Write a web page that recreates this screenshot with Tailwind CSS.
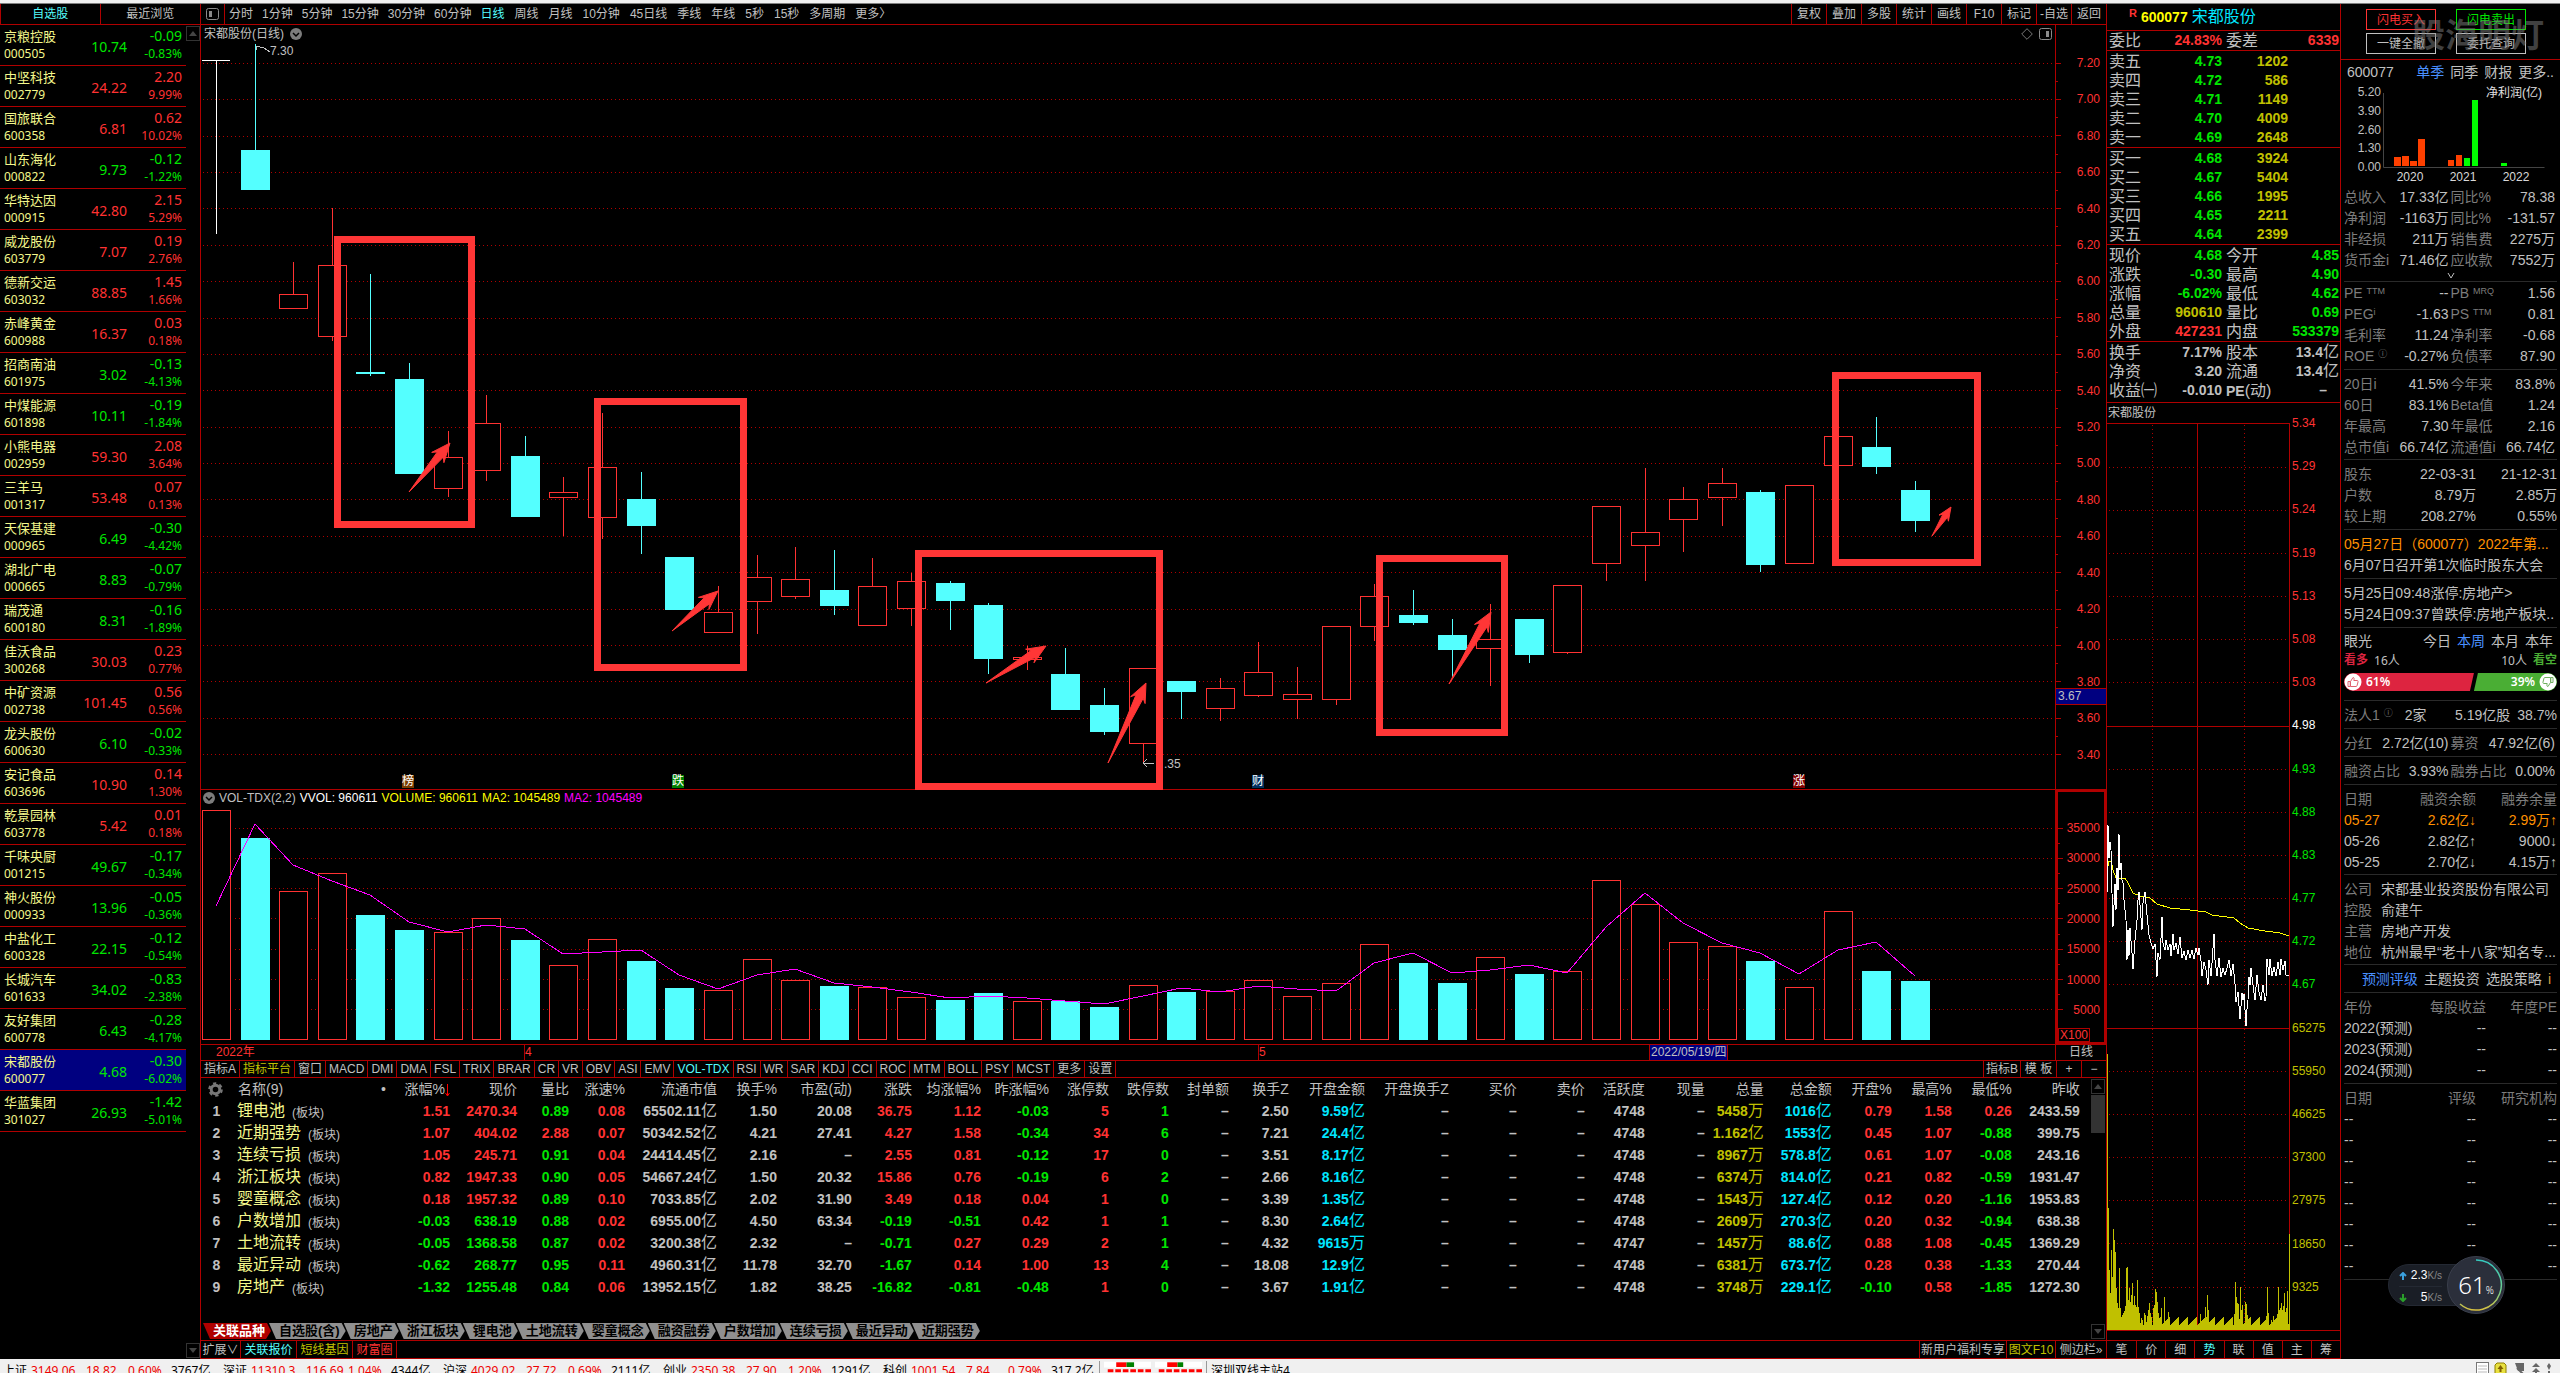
<!DOCTYPE html>
<html lang="zh-CN">
<head>
<meta charset="utf-8">
<meta name="viewport" content="width=device-width, initial-scale=1">
<title>宋都股份 600077</title>
<script src="https://cdn.jsdelivr.net/npm/@tailwindcss/browser@4"></script>
</head>
<body class="h-screen flex flex-col overflow-hidden bg-black text-[#c0c0c0] text-xs font-['Liberation_Sans','Noto_Sans_CJK_SC',sans-serif]">
<div class="h-1 shrink-0 bg-[#f0f0f0] border-b border-[#808080]"></div>

<div class="flex flex-1 min-h-0">

  <!-- Watch list -->
  <aside class="w-[201px] shrink-0 flex flex-col border-r border-[#b00000]">
    <div class="grid grid-cols-2 h-[21px] shrink-0 border-b border-l border-[#b00000]">
      <button class="text-[#54fcfc] border-r border-[#b00000]">自选股</button>
      <button>最近浏览</button>
    </div>
    <div class="flex flex-1 min-h-0">
      <ul id="watch" class="flex-1 font-['Noto_Sans','Noto_Sans_CJK_SC',sans-serif]"></ul>
      <div class="w-3.5 flex flex-col justify-between py-px">
        <button aria-label="向上" class="h-[15px] border border-[#333] grid place-items-center"><svg width="8" height="5" viewBox="0 0 8 5"><path d="M4 0l4 5H0z" fill="#444"/></svg></button>
        <button aria-label="向下" class="h-[15px] border border-[#333] grid place-items-center"><svg width="8" height="5" viewBox="0 0 8 5"><path d="M4 5l4-5H0z" fill="#444"/></svg></button>
      </div>
    </div>
  </aside>

  <!-- Chart and related boards -->
  <main class="flex-1 min-w-0 flex flex-col">
    <nav class="flex h-[21px] shrink-0 border-b border-[#b00000]">
      <button aria-label="侧栏" class="w-6 border-r border-[#b00000] grid place-items-center"><svg width="13" height="12" viewBox="0 0 13 12"><rect x=".5" y=".5" width="12" height="11" rx="2" fill="none" stroke="#8a8a8a"/><rect x="3" y="3" width="3" height="6" fill="#8a8a8a"/></svg></button>
      <div class="flex items-center gap-[9px] pl-1">
        <div id="minutes" class="flex gap-[9px]"></div>
        <div id="periods" class="flex gap-2.5"></div>
      </div>
      <div id="tools" class="ml-auto flex"></div>
    </nav>

    <section class="flex flex-1 min-h-0 border-b border-[#b00000]">
      <div class="flex-1 min-w-0 flex flex-col">
        <div class="relative flex-1 min-h-0 border-b border-[#b00000]">
          <svg id="price" class="absolute inset-0 w-full h-full overflow-visible" viewBox="201 25 1854 764" preserveAspectRatio="none" shape-rendering="crispEdges"></svg>
          <div class="absolute left-[3px] top-0 h-[18px] flex items-center gap-1.5">
            <span>宋都股份(日线)</span>
            <svg width="12" height="12" viewBox="0 0 12 12"><circle cx="6" cy="6" r="6" fill="#7c7c7c"/><path d="M3 5l3 3 3-3" fill="none" stroke="#000" stroke-width="1.5"/></svg>
          </div>
          <div class="absolute right-[3px] top-0 h-[18px] flex items-center gap-1.5">
            <svg width="12" height="12" viewBox="0 0 12 12"><path d="M6 .7L11.3 6 6 11.3.7 6z" fill="none" stroke="#777"/></svg>
            <svg width="13" height="12" viewBox="0 0 13 12"><rect x=".5" y=".5" width="12" height="11" rx="2" fill="none" stroke="#8a8a8a"/><rect x="7" y="3" width="3" height="6" fill="#8a8a8a"/></svg>
          </div>
          <div id="marks"></div>
        </div>
        <div class="relative h-[254px] shrink-0">
          <svg id="volume" class="absolute inset-0 w-full h-full" viewBox="201 790 1854 254" preserveAspectRatio="none" shape-rendering="crispEdges"></svg>
          <div class="absolute left-0.5 top-0 h-4 flex items-center gap-1 leading-4 whitespace-nowrap">
            <svg width="12" height="12" viewBox="0 0 12 12"><circle cx="6" cy="6" r="6" fill="#7c7c7c"/><path d="M3 5l3 3 3-3" fill="none" stroke="#000" stroke-width="1.5"/></svg>
            <span>VOL-TDX(2,2)</span><span class="text-white">VVOL: 960611</span><span class="text-[#ffff00]">VOLUME: 960611</span><span class="text-[#ffff00]">MA2: 1045489</span><span class="text-[#ff00ff]">MA2: 1045489</span>
          </div>
        </div>
      </div>
      <div class="w-[51px] shrink-0 flex flex-col border-l border-[#b00000] text-[#ff3232]">
        <div class="relative flex-1 min-h-0 border-b border-[#b00000]">
          <div id="paxis" class="h-full flex flex-col justify-between pt-[31px] pb-[27px] pr-1.5"></div>
          <div class="absolute inset-x-0 top-[663px] h-[17px] bg-[#000080] border-y border-[#b00000] text-[#c0c0c0] leading-[15px] pl-0.5">3.67</div>
        </div>
        <div class="relative h-[254px] border-2 border-[#b00000]">
          <div id="vaxis" class="h-full flex flex-col justify-between pt-[29px] pb-[25px] pr-1"></div>
          <div class="absolute left-0 bottom-0 border border-[#b00000] px-px leading-3">X100</div>
        </div>
      </div>
    </section>

    <div class="flex h-4 shrink-0 border-b border-[#b00000] leading-[15px]">
      <div class="relative flex-1 text-[#ff3232]" id="dates"></div>
      <button class="w-[51px] border-l border-[#b00000] text-[#c0c0c0]">日线</button>
    </div>

    <nav class="flex justify-between h-[17px] shrink-0 border-b border-[#b00000] leading-4">
      <div id="indicators" class="flex"></div>
      <div class="flex">
        <button class="w-[37px] border-l border-[#b00000] whitespace-nowrap">指标B</button>
        <button class="w-9 border-l border-[#b00000]">模 板</button>
        <button class="w-[25px] border-l border-[#b00000]">+</button>
        <button class="w-[25px] border-l border-[#b00000]">−</button>
      </div>
    </nav>

    <div class="flex h-[245px] shrink-0">
      <div class="flex-1 min-w-0">
        <table class="w-full table-fixed border-collapse text-sm leading-[22px] whitespace-nowrap text-right">
          <colgroup id="cols"></colgroup>
          <thead><tr id="thead"></tr></thead>
          <tbody id="tbody" class="font-bold"></tbody>
        </table>
      </div>
      <div class="w-[15px] flex flex-col pt-px pr-px">
        <button aria-label="向上" class="h-[15px] shrink-0 border border-[#333] grid place-items-center"><svg width="8" height="5" viewBox="0 0 8 5"><path d="M4 0l4 5H0z" fill="#444"/></svg></button>
        <div class="h-[38px] shrink-0 mt-px bg-[#333]"></div>
        <button aria-label="向下" class="h-[15px] shrink-0 mt-auto -mb-4 border border-[#333] grid place-items-center"><svg width="8" height="5" viewBox="0 0 8 5"><path d="M4 5l4-5H0z" fill="#444"/></svg></button>
      </div>
    </div>

    <nav id="boards" class="flex h-[18px] shrink-0 pb-px pl-2 border-b border-[#b00000] text-[13px] leading-4 font-bold"></nav>

    <nav class="flex justify-between h-[18px] shrink-0 border-b border-[#b00000] leading-4">
      <div class="flex">
        <button class="w-10 border-r border-[#b00000] whitespace-nowrap">扩展∨</button>
        <button class="w-14 border-r border-[#b00000] text-[#54fcfc]">关联报价</button>
        <button class="w-14 border-r border-[#b00000] text-[#c0c000]">短线基因</button>
        <button class="w-11 border-r border-[#b00000] text-[#ff3232]">财富圈</button>
      </div>
      <div class="flex">
        <button class="w-[87px] border-l border-[#b00000]">新用户福利专享</button>
        <button class="w-[49px] border-l border-[#b00000] text-[#c0c000] whitespace-nowrap">图文F10</button>
        <button class="w-[51px] border-l border-[#b00000]">侧边栏»</button>
      </div>
    </nav>
  </main>

  <!-- Quote panel -->
  <section class="w-[235px] shrink-0 flex flex-col border-x border-[#b00000]">
    <h1 class="flex items-center h-[27px] shrink-0 pl-[22px] border-b border-[#b00000]">
      <span class="text-[11px] leading-none font-bold text-[#ff3232] self-start mt-1">R</span>
      <span class="text-sm font-bold text-[#ffff00] ml-1">600077</span>
      <span class="text-base leading-none text-[#00e6ff] ml-1">宋都股份</span>
    </h1>
    <div id="quote" class="text-sm leading-[19px] font-bold"></div>
    <div class="h-5 leading-5 pl-px">宋都股份</div>
    <div class="flex flex-1 min-h-0 border-b border-[#b00000]">
      <svg id="intraday" class="flex-1 min-w-0 h-full" viewBox="2107 423 183 907" preserveAspectRatio="none" shape-rendering="crispEdges"></svg>
      <div class="w-[50px] shrink-0 pl-0.5">
        <div id="iaxis" class="h-full flex flex-col justify-between -mt-2 pb-[27px] leading-4"></div>
      </div>
    </div>
    <div id="qtabs" class="grid grid-cols-8 h-[19px] shrink-0 mt-[9px] border-y border-[#b00000] leading-4"></div>
  </section>

  <!-- Company info -->
  <aside class="relative w-[219px] shrink-0 text-sm leading-[21px] whitespace-nowrap">
    <div class="relative grid grid-cols-2 gap-x-5 gap-y-[3px] pl-[25px] pr-[34px] pt-[5px] pb-[5px] border-b border-[#b00000] text-xs">
      <button class="h-[21px] border border-[#ff3232] text-[#ff3232]">闪电买入</button>
      <button class="h-[21px] border border-[#00e600] text-[#00e600]">闪电卖出</button>
      <button class="h-[21px] border border-[#c0c0c0]">一键全撤</button>
      <button class="h-[21px] border border-[#c0c0c0]">委托查询</button>
      <div class="absolute left-[71px] top-3.5 text-[33px] leading-9 font-bold text-[#808080]/50 pointer-events-none">股海明灯</div>
    </div>
    <div class="flex h-6 items-center pl-1.5 pr-1.5">
      <span class="mr-auto">600077</span>
      <span class="flex gap-1.5"><a href="#" class="text-[#4a90ff]">单季</a><a href="#">同季</a><a href="#">财报</a><a href="#">更多..</a></span>
    </div>
    <svg class="block w-full h-[103px] text-xs" viewBox="2341 84 219 103">
      <g fill="#c0c0c0" text-anchor="end"><text x="2381" y="96">5.20</text><text x="2381" y="115">3.90</text><text x="2381" y="134">2.60</text><text x="2381" y="152">1.30</text><text x="2381" y="171">0.00</text></g>
      <g fill="#d8d8d8" text-anchor="middle"><text x="2410" y="181">2020</text><text x="2463" y="181">2021</text><text x="2516" y="181">2022</text></g>
      <text x="2486" y="97" fill="#e0e0e0">净利润(亿)</text>
      <path d="M2383.5 93v74.500h161" fill="none" stroke="#444"/>
      <path fill="#ff4000" d="M2394 157h7v9h-7zM2402 156h7v10h-7zM2410 161h7v5h-7zM2418 139h7v27h-7zM2448 160h6v6h-6zM2456 155h6v11h-6z"/>
      <path fill="#00ff00" d="M2464 158h6v8h-6zM2472 100h6v66h-6zM2501 163h6v3h-6z"/>
    </svg>
    <div id="info" class="pl-[3px] pr-[3px]"></div>

    <div class="absolute right-[55px] bottom-[45px] flex items-center">
      <div class="w-[75px] h-[42px] -mr-4 rounded-l-full bg-[#1a1e26] border border-[#242933] leading-5 pl-2.5 pr-5 text-xs">
        <div class="flex items-center justify-between border-b border-[#242933]"><svg width="8" height="8" viewBox="0 0 8 8"><path d="M4 8V1M1 4l3-3 3 3" fill="none" stroke="#3aa0dd" stroke-width="2"/></svg><span class="text-white">2.3<span class="text-[10px] text-[#888]">K/s</span></span></div>
        <div class="flex items-center justify-between"><svg width="8" height="8" viewBox="0 0 8 8"><path d="M4 0v7M1 4l3 3 3-3" fill="none" stroke="#2aa02a" stroke-width="2"/></svg><span class="text-white">5<span class="text-[10px] text-[#888]">K/s</span></span></div>
      </div>
      <div class="relative w-[58px] h-[58px] grid place-items-center">
        <svg class="absolute inset-0" width="58" height="58" viewBox="0 0 58 58"><defs><linearGradient id="ring" x1="0" y1="0" x2="0" y2="1"><stop offset="0" stop-color="#35c9c0"/><stop offset=".6" stop-color="#6fcf90"/><stop offset="1" stop-color="#d8c040"/></linearGradient></defs><circle cx="29" cy="29" r="28.500" fill="#2b2f3b" stroke="#3a3f4c"/><path d="M29 4a25 25 0 1 1-16 44" fill="none" stroke="url(#ring)" stroke-width="1.500"/></svg>
        <div class="relative text-white text-[24px] leading-none font-['Noto_Sans',sans-serif] font-light">61<span class="text-[10px]">%</span></div>
      </div>
    </div>
  </aside>
</div>

<!-- Index ticker -->
<footer class="h-3.5 shrink-0 overflow-hidden flex bg-[#f0f0f0] text-black leading-5 pt-0.5 pl-[3px] whitespace-nowrap font-['Noto_Sans','Noto_Sans_CJK_SC',sans-serif]">
  <div id="ticker" class="flex"></div>
  <div class="w-[108px] -ml-1 h-5 border-x border-[#999] flex gap-1 px-1">
    <svg width="50" height="12" viewBox="0 0 50 12"><path d="M0 .5h50v6H0z" fill="#fff"/><path d="M13 1h11v5H13z" fill="#ff0000"/><path d="M24 1h8v5h-8z" fill="#008000"/><path d="M4 10h46" stroke="#ff0000" stroke-width="3" stroke-dasharray="6 2"/></svg>
    <svg width="50" height="12" viewBox="0 0 50 12"><path d="M0 .5h50v6H0z" fill="#fff"/><path d="M13 1h11v5H13z" fill="#ff0000"/><path d="M24 1h6v5h-6z" fill="#008000"/><path d="M4 10h46" stroke="#ff0000" stroke-width="3" stroke-dasharray="6 2"/></svg>
  </div>
  <span class="pl-1">深圳双线主站4</span>
  <svg class="ml-auto mr-1.5" width="78" height="14" viewBox="0 0 78 14"><rect x=".5" y="1.500" width="12" height="14" fill="#fff" stroke="#777"/><path d="M2 5h9M2 8h9M2 11h9" stroke="#bbb"/><path d="M19 4l2-2h7l2 2v10H19z" fill="#e8e040" stroke="#908000"/><path d="M24.500 4l3 4h-6zM23.500 8h2v3h-2z" fill="#806000"/><path d="M39 2h9v8h-6z" fill="#666"/><path d="M41 7l6 6" stroke="#666" stroke-width="2"/><path d="M60 2l4 4h-8zM60 7l4 4h-8zM59 10h2v3h-2zM73 2l2 3-2 4-2-4zM72 10h2v2h-2z" fill="#666"/></svg>
</footer>

<script>
const $ = id => document.getElementById(id);
const UP = 'text-[#ff3232]', DOWN = 'text-[#00e600]';
const tone = v => String(v).startsWith('-') ? DOWN : UP;

$('watch').innerHTML = `京粮控股 000505 10.74 -0.09 -0.83%|中坚科技 002779 24.22 2.20 9.99%|国旅联合 600358 6.81 0.62 10.02%|山东海化 000822 9.73 -0.12 -1.22%|华特达因 000915 42.80 2.15 5.29%|威龙股份 603779 7.07 0.19 2.76%|德新交运 603032 88.85 1.45 1.66%|赤峰黄金 600988 16.37 0.03 0.18%|招商南油 601975 3.02 -0.13 -4.13%|中煤能源 601898 10.11 -0.19 -1.84%|小熊电器 002959 59.30 2.08 3.64%|三羊马 001317 53.48 0.07 0.13%|天保基建 000965 6.49 -0.30 -4.42%|湖北广电 000665 8.83 -0.07 -0.79%|瑞茂通 600180 8.31 -0.16 -1.89%|佳沃食品 300268 30.03 0.23 0.77%|中矿资源 002738 101.45 0.56 0.56%|龙头股份 600630 6.10 -0.02 -0.33%|安记食品 603696 10.90 0.14 1.30%|乾景园林 603778 5.42 0.01 0.18%|千味央厨 001215 49.67 -0.17 -0.34%|神火股份 000933 13.96 -0.05 -0.36%|中盐化工 600328 22.15 -0.12 -0.54%|长城汽车 601633 34.02 -0.83 -2.38%|友好集团 600778 6.43 -0.28 -4.17%|宋都股份 600077 4.68 -0.30 -6.02%|华蓝集团 301027 26.93 -1.42 -5.01%`
  .split('|').map(r => {
    const [n, c, p, d, q] = r.split(' ');
    return `<li class="flex items-center h-[41px] pl-1 pr-1 border-b border-[#b00000] ${c === '600077' ? 'bg-[#000080]' : ''}">
      <div class="w-[58px] text-[#f4f88c]"><div class="text-[13px] leading-[18px]">${n}</div><div class="leading-[18px]">${c}</div></div>
      <div class="flex-1 text-right text-sm pt-1 ${tone(d)}">${p}</div>
      <div class="w-[55px] text-right ${tone(d)}"><div class="text-sm leading-[18px]">${d}</div><div class="leading-[18px]">${q}</div></div></li>`;
  }).join('');

const period = t => `<button class="whitespace-nowrap ${t === '日线' ? 'text-[#54fcfc]' : ''}">${t}</button>`;
$('minutes').innerHTML = '分时 1分钟 5分钟 15分钟 30分钟 60分钟'.split(' ').map(period).join('');
$('periods').innerHTML = '日线 周线 月线 10分钟 45日线 季线 年线 5秒 15秒 多周期 更多〉'.split(' ').map(period).join('');
$('tools').innerHTML = '复权 叠加 多股 统计 画线 F10 标记 -自选 返回'.split(' ')
  .map(t => `<button class="w-[35px] border-l border-[#b00000] whitespace-nowrap">${t}</button>`).join('');
$('indicators').innerHTML = '指标A 指标平台 窗口 MACD DMI DMA FSL TRIX BRAR CR VR OBV ASI EMV VOL-TDX RSI WR SAR KDJ CCI ROC MTM BOLL PSY MCST 更多 设置'.split(' ')
  .map(t => `<button class="px-[3px] border-r border-[#b00000] ${t === 'VOL-TDX' ? 'text-[#54fcfc]' : t === '指标平台' ? 'text-[#c0c000]' : ''}">${t}</button>`).join('');
$('boards').innerHTML = '关联品种 自选股(含) 房地产 浙江板块 锂电池 土地流转 婴童概念 融资融券 户数增加 连续亏损 最近异动 近期强势'.split(' ')
  .map((t, i) => `<button class="-ml-1.5 px-2.5 h-4 [clip-path:polygon(0_0,calc(100%-8px)_0,calc(100%-4px)_50%,calc(100%-9px)_100%,7px_100%)] ${i ? 'bg-[#909090] text-black' : 'bg-[#b00000] text-white'}">${t}</button>`).join('');
$('qtabs').innerHTML = [...'笔价细势联值主筹'].map((t, i) => `<button class="${i ? 'border-l border-[#b00000]' : ''} ${t === '势' ? 'text-[#54fcfc]' : ''}">${t}</button>`).join('');

/* Daily candles: body top, body bottom, high, low, filled(1)/hollow(0) */
const K = [null,[150,190,44,190,1],[294,309,262,309,0],[265,337,208,341,0],[372,374,274,376,1],[379,474,363,474,1],[457,489,431,497,0],[423,471,395,481,0],[456,517,436,517,1],[492,498,477,536,0],[467,518,413,539,0],[499,526,472,554,1],[557,610,557,610,1],[612,633,586,633,0],[577,602,555,634,0],[579,597,547,599,0],[590,606,550,615,1],[586,626,558,626,0],[581,609,573,626,0],[583,601,581,630,1],[605,659,603,674,1],[657,660,646,670,0],[674,710,648,710,1],[705,732,688,735,1],[668,744,668,763,0],[681,692,681,719,1],[688,709,678,721,0],[672,696,642,697,0],[694,700,667,719,0],[626,700,626,705,0],[596,627,584,641,0],[615,623,590,625,1],[635,650,619,677,1],[639,649,604,686,0],[619,655,619,663,1],[585,653,585,654,0],[506,564,506,581,0],[532,546,468,581,0],[499,520,487,552,0],[483,498,468,526,0],[492,565,490,572,1],[485,564,485,564,0],[436,466,436,466,0],[447,467,417,474,1],[490,521,481,532,1]];
const V = [810,838,891,873,915,930,932,918,940,965,939,961,988,990,959,980,986,987,997,1000,993,1001,1001,1007,985,992,991,980,996,983,944,963,983,957,974,971,880,904,942,946,961,987,911,971,981];
const M = [906,824,865,881,895,922,932,925,929,954,952,950,975,989,975,969,983,987,992,998,996,998,1001,1004,996,988,992,986,989,991,963,953,973,970,965,973,927,893,923,943,953,974,950,942,976];
const X = i => Math.round(216 + 38.61 * i);
const dot = (x1, x2, y) => `<path d="M${x1} ${y}.500H${x2}" stroke="#b00000" stroke-dasharray="1 3"/>`;
const arrow = ([x1, y1, x2, y2, s = 1]) => {
  const l = Math.hypot(x2 - x1, y2 - y1), u = (x2 - x1) / l, v = (y2 - y1) / l;
  const p = (back, side) => `${(x2 - u * back * s - v * side * s).toFixed(1)},${(y2 - v * back * s + u * side * s).toFixed(1)}`;
  return `<polygon shape-rendering="auto" fill="#ff3636" stroke="#ff3636" points="${x1},${y1} ${p(15, 4)} ${p(19, 8)} ${x2},${y2} ${p(19, -8)} ${p(15, -4)}"/>`;
};
let s = '';
for (let i = 0; i < 20; i++) s += dot(203, 2052, Math.round(63 + i * 36.37));
s += '<path d="M202 60.500h28M216.500 60V234" stroke="#fff"/>';
K.forEach((k, i) => {
  if (!k) return;
  const [a, b, h, l, f] = k, x = X(i), c = f ? '#54ffff' : '#ff3232';
  s += `<path d="M${x}.500 ${h}V${a}M${x}.500 ${b}V${l}" stroke="${c}"/>`;
  s += f ? `<rect x="${x - 14}" y="${a}" width="29" height="${b - a}" fill="${c}"/>`
         : `<rect x="${x - 13.5}" y="${a + .5}" width="28" height="${b - a - 1}" fill="#000" stroke="${c}"/>`;
});
s += '<path d="M256 46l8 2 6 4M256 50v-4h4" fill="none" stroke="#c0c0c0"/><path d="M1143 763h11M1147 759l-4 4 4 4" fill="none" stroke="#c0c0c0"/>';
[[334,236,475,528],[594,398,747,671],[915,550,1163,790],[1376,555,1508,736],[1832,372,1981,566]].forEach(([a, b, c, d]) =>
  s += `<rect x="${a + 3.5}" y="${b + 3.5}" width="${c - a - 7}" height="${d - b - 7}" fill="none" stroke="#ff3636" stroke-width="7"/>`);
[[409,492,450,443],[672,631,718,591],[986,683,1046,646],[1108,763,1146,683],[1449,684,1491,612],[1932,536,1951,507,.7]].forEach(a => s += arrow(a));
$('price').innerHTML = s;

/* Notes pinned to the price canvas: x, y, text, class */
const pin = (x, y, t, c) => `<span class="absolute ${c}" style="left:${((x - 201) / 18.54).toFixed(3)}%;top:${((y - 25) / 7.64).toFixed(3)}%">${t}</span>`;
$('marks').innerHTML = pin(270, 45, '7.30', 'leading-3') + pin(1164, 758, '.35', 'leading-3')
  + pin(402, 775, '榜', 'leading-[13px] text-white bg-[#7a3c00]') + pin(672, 775, '跌', 'leading-[13px] text-white bg-[#008000]')
  + pin(1252, 775, '财', 'leading-[13px] text-white bg-[#003060]') + pin(1793, 775, '涨', 'leading-[13px] text-white bg-[#800000]');

s = '';
for (let i = 0; i < 7; i++) s += dot(235, 2052, Math.round(827.5 + i * 30.3));
V.forEach((t, i) => {
  const x = X(i), f = K[i] && K[i][4];
  s += f ? `<rect x="${x - 14}" y="${t}" width="29" height="${1040 - t}" fill="#54ffff"/>`
         : `<rect x="${x - 13.5}" y="${t + .5}" width="28" height="${1039 - t}" fill="#000" stroke="#ff3232"/>`;
});
s += `<polyline fill="none" stroke="#ff00ff" points="${M.map((y, i) => X(i) + ',' + y).join(' ')}"/>`;
$('volume').innerHTML = s;

const axis = labels => labels.map((t, i) =>
  (i ? '<div class="h-3.5 flex items-center"><i class="w-0.5 h-px bg-[#b00000]"></i></div>' : '') +
  `<div class="h-3.5 leading-[14px] flex items-center justify-between"><i class="w-[5px] h-px bg-[#b00000]"></i><span>${t}</span></div>`).join('');
$('paxis').innerHTML = axis(Array.from({length: 20}, (_, i) => (7.2 - i * .2).toFixed(2)));
$('vaxis').innerHTML = axis([35000, 30000, 25000, 20000, 15000, 10000, 5000]);

const at = (x, t, c) => `<span class="absolute top-0 whitespace-nowrap h-[15px] ${c}" style="left:${((x - 201) / 18.54).toFixed(3)}%">${t}</span>`;
$('dates').innerHTML = at(216, '2022年', '') + at(524, '4', 'border-l border-[#b00000]') + at(1258, '5', 'border-l border-[#b00000]')
  + at(1649, '2022/05/19/四', 'border-x border-[#b00000] bg-[#000080] text-[#c0c0c0] px-px');

/* Related boards table */
const H = ['', '名称(9)', '涨幅%', '现价', '量比', '涨速%', '流通市值', '换手%', '市盈(动)', '涨跌', '均涨幅%', '昨涨幅%', '涨停数', '跌停数', '封单额', '换手Z', '开盘金额', '开盘换手Z', '买价', '卖价', '活跃度', '现量', '总量', '总金额', '开盘%', '最高%', '最低%', '昨收'];
$('cols').innerHTML = [29,160,60,67,52,56,92,60,75,60,69,68,60,60,60,60,76,84,68,68,60,60,59,68,60,60,60,68,11].map(w => `<col style="width:${(w / 18.9).toFixed(3)}%">`).join('');
const GEAR = '<svg class="mx-auto" width="15" height="15" viewBox="0 0 15 15"><circle cx="7.500" cy="7.500" r="4.300" fill="none" stroke="#777" stroke-width="3"/><circle cx="7.500" cy="7.500" r="6.300" fill="none" stroke="#777" stroke-width="2" stroke-dasharray="3.300 3.300"/></svg>';
$('thead').innerHTML = H.map((h, i) => i === 0 ? `<th class="p-0">${GEAR}</th>`
  : i === 1 ? `<th class="p-0 pl-2 font-normal text-left"><div class="flex justify-between pr-1"><span>${h}</span><span>•</span></div></th>`
  : `<th class="p-0 font-normal text-right">${h}${i === 2 ? '<svg class="inline" width="5" height="13" viewBox="0 0 5 13"><path d="M2.500 0v12M.5 9l2 3 2-3" fill="none" stroke="#ff0000"/></svg>' : ''}</th>`).join('') + '<th></th>';
const R = `锂电池 1.51 2470.34 0.89 0.08 65502.11亿 1.50 20.08 36.75 1.12 -0.03 5 1 – 2.50 9.59亿 – – – 4748 – 5458万 1016亿 0.79 1.58 0.26 2433.59
近期强势 1.07 404.02 2.88 0.07 50342.52亿 4.21 27.41 4.27 1.58 -0.34 34 6 – 7.21 24.4亿 – – – 4748 – 1.162亿 1553亿 0.45 1.07 -0.88 399.75
连续亏损 1.05 245.71 0.91 0.04 24414.45亿 2.16 – 2.55 0.81 -0.12 17 0 – 3.51 8.17亿 – – – 4748 – 8967万 578.8亿 0.61 1.07 -0.08 243.16
浙江板块 0.82 1947.33 0.90 0.05 54667.24亿 1.50 20.32 15.86 0.76 -0.19 6 2 – 2.66 8.16亿 – – – 4748 – 6374万 814.0亿 0.21 0.82 -0.59 1931.47
婴童概念 0.18 1957.32 0.89 0.10 7033.85亿 2.02 31.90 3.49 0.18 0.04 1 0 – 3.39 1.35亿 – – – 4748 – 1543万 127.4亿 0.12 0.20 -1.16 1953.83
户数增加 -0.03 638.19 0.88 0.02 6955.00亿 4.50 63.34 -0.19 -0.51 0.42 1 1 – 8.30 2.64亿 – – – 4748 – 2609万 270.3亿 0.20 0.32 -0.94 638.38
土地流转 -0.05 1368.58 0.87 0.02 3200.38亿 2.32 – -0.71 0.27 0.29 2 1 – 4.32 9615万 – – – 4747 – 1457万 88.6亿 0.88 1.08 -0.45 1369.29
最近异动 -0.62 268.77 0.95 0.11 4960.31亿 11.78 32.70 -1.67 0.14 1.00 13 4 – 18.08 12.9亿 – – – 4748 – 6381万 673.7亿 0.28 0.38 -1.33 270.44
房地产 -1.32 1255.48 0.84 0.06 13952.15亿 1.82 38.25 -16.82 -0.81 -0.48 1 0 – 3.67 1.91亿 – – – 4748 – 3748万 229.1亿 -0.10 0.58 -1.85 1272.30`;
const unit = t => t.replace(/[亿万]/, m => `<span class="font-normal text-base leading-none">${m}</span>`);
$('tbody').innerHTML = R.split('\n').map((row, n) => {
  const v = row.split(' ');
  return `<tr><td class="p-0 pl-0.5 text-center">${n + 1}</td><td class="p-0 pl-[7px] text-left font-normal"><div class="h-[22px] flex items-center gap-[7px]"><span class="text-base leading-[22px] text-[#f4f88c]">${v[0]}</span><span class="text-xs pt-1">(板块)</span></div></td>` +
    v.slice(1).map((t, j) => {
      const i = j + 1;
      let c = '';
      if ([1, 4, 8, 9, 10, 23, 24, 25].includes(i)) c = tone(t);
      if (i === 2) c = tone(v[1]);
      if (i === 3) c = +t > 1 ? UP : DOWN;
      if (i === 11) c = UP;
      if (i === 12) c = DOWN;
      if (i === 15 || i === 22) c = 'text-[#00e6ff]';
      if (i === 21) c = 'text-[#c0c000]';
      return `<td class="p-0 h-[22px] ${c}">${unit(t)}</td>`;
    }).join('') + '<td></td></tr>';
}).join('');

/* Quote panel */
const lab = t => `<span class="text-base leading-[19px] font-normal">${t}</span>`;
const row2 = (a, b, c, d, cb, cd) => `<div class="grid grid-cols-2 gap-1 pl-0.5 pr-px"><div class="flex justify-between">${lab(a)}<span class="${cb}">${b}</span></div><div class="flex justify-between">${lab(c)}<span class="${cd}">${unit(d)}</span></div></div>`;
const level = (a, p, v) => `<div class="grid grid-cols-2 gap-1 pl-0.5 pr-px"><div class="flex justify-between">${lab(a)}<span class="${DOWN}">${p}</span></div><span class="text-right pr-[51px] text-[#c0c000]">${v}</span></div>`;
$('quote').innerHTML =
  `<div class="h-5 border-b border-[#b00000]">${row2('委比', '24.83%', '委差', '6339', UP, UP)}</div>` +
  `<div class="h-[97px] pt-px border-b border-[#b00000]">${level('卖五', '4.73', 1202)}${level('卖四', '4.72', 586)}${level('卖三', '4.71', 1149)}${level('卖二', '4.70', 4009)}${level('卖一', '4.69', 2648)}</div>` +
  `<div class="h-[97px] pt-px border-b border-[#b00000]">${level('买一', '4.68', 3924)}${level('买二', '4.67', 5404)}${level('买三', '4.66', 1995)}${level('买四', '4.65', 2211)}${level('买五', '4.64', 2399)}</div>` +
  `<div class="h-[97px] pt-px border-b border-[#b00000]">${row2('现价', '4.68', '今开', '4.85', DOWN, DOWN)}${row2('涨跌', '-0.30', '最高', '4.90', DOWN, DOWN)}${row2('涨幅', '-6.02%', '最低', '4.62', DOWN, DOWN)}${row2('总量', '960610', '量比', '0.69', 'text-[#c0c000]', DOWN)}${row2('外盘', '427231', '内盘', '533379', UP, DOWN)}</div>` +
  `<div class="h-[61px] pt-px border-b border-[#b00000]">${row2('换手', '7.17%', '股本', '13.4亿', '', '')}${row2('净资', '3.20', '流通', '13.4亿', '', '')}${row2('收益㈠', '-0.010', '<span class="text-sm font-bold">PE</span>(动)', '–', '', 'pr-3')}</div>`;

/* Intraday chart */
s = '';
for (let i = 1; i < 21; i++) if (i !== 7 && i !== 14) s += dot(2109, 2288, Math.round(423.5 + i * 43.15));
s += '<path d="M2152.500 425V1330M2244.500 425V1330" stroke="#b00000" stroke-dasharray="1 3"/>';
s += '<path d="M2107 423.500H2289.500V1330M2197.500 423V1330M2107 726.500H2289M2107 1028.500H2289" fill="none" stroke="#b00000"/>';
const spikes = {0:276,1:122,2:60,3:37,4:80,5:53,6:101,7:90,8:78,9:42,10:27,11:22,12:62,13:22,14:13,15:15,16:17,17:19,18:24,19:62,20:63,21:30,22:42,23:28,24:35,25:47,26:25,27:34,28:25,29:23,30:50,31:23,32:17,33:7,35:10,37:17,38:15,40:14,41:20,42:27,43:17,46:22,47:25,48:41,49:38,50:28,51:17,54:22,57:33,61:18,93:16,98:23,99:13,100:35,101:20,127:16,128:48,129:33,130:27,131:26,133:43,134:20,135:25,138:28,139:26,140:15,159:14,160:43,161:17,164:10,166:14,170:16,171:43,172:20,173:22,174:27,175:20,176:24,177:37,178:18,179:22,180:39};
let bars = '';
for (let i = 0; i < 182; i++) { const h = spikes[i] || 5 + (i * 37) % 9; bars += `M${2107 + i} 1330v-${h}h1v${h}z`; }
s += `<path d="${bars}M2289 1330v-96h1v96z" fill="#c0c000"/>`;
s += '<polyline fill="none" stroke="#ffff00" points="2107,870 2109,861 2111,861 2113,870 2116,878 2120,878 2125,878 2128,883 2133,893 2140,896 2150,898 2157,904 2170,908 2190,910 2206,912 2212,915 2234,918 2240,923 2248,928 2265,931 2280,933 2289,936"/>';
s += '<polyline fill="none" stroke="#fff" points="2107,893 2108,825 2109,858 2110,842 2111,850 2112,893 2113,927 2114,905 2115,884 2116,910 2117,868 2118,890 2119,834 2120,870 2121,863 2122,880 2123,883 2124,900 2126,920 2127,960 2128,930 2129,956 2130,928 2132,953 2133,969 2135,940 2137,920 2138,900 2139,892 2141,918 2142,930 2143,903 2145,892 2147,915 2149,935 2151,943 2153,949 2155,944 2156,960 2157,977 2158,953 2160,960 2162,917 2163,943 2165,950 2166,940 2168,950 2170,944 2171,956 2173,934 2174,950 2176,943 2178,954 2180,937 2182,958 2184,951 2186,960 2188,950 2190,958 2192,950 2194,959 2196,948 2198,955 2199,948 2201,961 2202,976 2204,962 2206,970 2208,985 2209,960 2211,976 2212,963 2214,934 2215,960 2217,976 2219,958 2221,977 2223,968 2225,975 2227,968 2229,960 2231,976 2233,964 2235,984 2236,1002 2238,992 2240,1019 2242,993 2243,1000 2244,994 2246,1026 2247,1009 2248,1000 2249,977 2250,985 2251,968 2253,985 2255,1000 2257,975 2259,992 2261,1000 2263,985 2265,1001 2266,997 2267,959 2269,975 2270,959 2272,976 2274,967 2276,976 2278,962 2280,975 2281,959 2283,970 2285,961 2286,975 2289,976"/>';
$('intraday').innerHTML = s;
$('iaxis').innerHTML = ['5.34','5.29','5.24','5.19','5.13','5.08','5.03','4.98','4.93','4.88','4.83','4.77','4.72','4.67','65275','55950','46625','37300','27975','18650','9325']
  .map((t, i) => `<span class="${i < 7 ? UP : i === 7 ? 'text-white' : i < 14 ? DOWN : 'text-[#c0c000]'}">${t}</span>`).join('');

/* Company info */
const g = t => `<span class="text-[#7c7c7c]">${t}</span>`;
const sup = t => `<sup class="text-[9px]">${t}</sup>`;
const four = (a, b, c, d) => `<div class="grid grid-cols-2 gap-0.5 pr-0.5"><div class="flex h-[21px] justify-between">${g(a)}<span>${b}</span></div><div class="flex h-[21px] justify-between">${g(c)}<span>${d}</span></div></div>`;
const three = (a, b, c, cl = '') => `<div class="grid grid-cols-[52px_80px_1fr] h-[21px] ${cl}"><span>${a}</span><span class="text-right">${b}</span><span class="text-right">${c}</span></div>`;
const sec = h => `<section class="pt-1 pb-0.5 border-b border-[#2a2a2a]">${h}</section>`;
const sec4 = h => `<section class="pt-1 pb-px border-b border-[#2a2a2a]">${h}</section>`;
const line = (t, c = '') => `<div class="h-[21px] ${c}">${t}</div>`;
const kv = (a, b) => `<div class="h-[21px] flex gap-[9px]">${g(a)}<span>${b}</span></div>`;
$('info').innerHTML =
  `<section class="border-b border-[#2a2a2a]">${four('总收入', '17.33亿', '同比%', '78.38')}${four('净利润', '-1163万', '同比%', '-131.57')}${four('非经损', '211万', '销售费', '2275万')}${four('货币金i', '71.46亿', '应收款', '7552万')}<div class="h-2.5 grid place-items-center"><svg width="8" height="6" viewBox="0 0 8 6"><path d="M1 0l3 5 3-5" fill="none" stroke="#c0c0c0"/></svg></div></section>` +
  `<section class="pt-px pb-0.5 border-b border-[#2a2a2a]">${four('PE ' + sup('TTM'), '--', 'PB ' + sup('MRQ'), '1.56')}${four('PEG' + sup('i'), '-1.63', 'PS ' + sup('TTM'), '0.81')}${four('毛利率', '11.24', '净利率', '-0.68')}${four('ROE ' + sup('ⓘ'), '-0.27%', '负债率', '87.90')}</section>` +
  sec4(four('20日i', '41.5%', '今年来', '83.8%') + four('60日', '83.1%', 'Beta值', '1.24') + four('年最高', '7.30', '年最低', '2.16') + four('总市值i', '66.74亿', '流通值i', '66.74亿')) +
  sec(three(g('股东'), '22-03-31', '21-12-31') + three(g('户数'), '8.79万', '2.85万') + three(g('较上期'), '208.27%', '0.55%')) +
  sec(line('05月27日（600077）2022年第...', 'text-[#ff9000] truncate') + line('6月07日召开第1次临时股东大会')) +
  sec(line('5月25日09:48涨停:房地产&gt;') + line('5月24日09:37曾跌停:房地产板块..')) +
  `<section class="pt-[3px] pb-[9px] border-b border-[#2a2a2a]">
    <div class="h-[21px] flex gap-1.5 pr-1"><span class="mr-auto">眼光</span><a href="#">今日</a><a href="#" class="text-[#4a90ff]">本周</a><a href="#">本月</a><a href="#">本年</a></div>
    <div class="h-[21px] leading-[17px] flex text-xs"><span class="text-[#dd2440] font-bold">看多</span><span class="ml-1.5 mr-auto font-['Noto_Sans','Noto_Sans_CJK_SC',sans-serif]">16人</span><span class="font-['Noto_Sans','Noto_Sans_CJK_SC',sans-serif]">10人</span><span class="ml-1.5 text-[#4aae34] font-bold">看空</span></div>
    <div class="flex h-[18px] leading-[18px] text-xs text-white font-semibold font-['Noto_Sans',sans-serif]">
      <div class="w-[61%] rounded-l-full bg-[#dd2440] flex gap-1 [clip-path:polygon(0_0,100%_0,calc(100%-4px)_100%,0_100%)]"><svg width="18" height="18" viewBox="0 0 18 18"><circle cx="9" cy="9" r="8.500" fill="#fff"/><path d="M4 8.500h2.200v5H4zM6.500 8.500L9 4.500c1.200 0 1.300 1 .8 3h3.400c1 0 .9 1 .8 1.500l-1 3.800c-.2.500-.5.700-1 .7H6.500z" fill="none" stroke="#e06070"/></svg>61%</div>
      <div class="flex-1 rounded-r-full bg-[#4aae34] flex justify-end gap-1 [clip-path:polygon(4px_0,100%_0,100%_100%,0_100%)]">39%<svg width="18" height="18" viewBox="0 0 18 18"><circle cx="9" cy="9" r="8.500" fill="#fff"/><path d="M14 9.500h-2.200v-5H14zM11.500 9.500L9 13.500c-1.200 0-1.300-1-.8-3H4.800c-1 0-.9-1-.8-1.500l1-3.800c.2-.500.5-.7 1-.7h5.500z" fill="none" stroke="#70b060"/></svg></div>
    </div></section>` +
  sec(`<div class="h-[21px] flex">${g('法人1 ' + sup('ⓘ'))}<span class="ml-3 mr-auto">2家</span><span class="mr-[7px]">5.19亿股</span><span>38.7%</span></div>`) +
  sec(four('分红', '2.72亿(10)', '募资', '47.92亿(6)')) +
  sec(four('融资占比', '3.93%', '融券占比', '0.00%')) +
  sec4(three('日期', '融资余额', '融券余量', 'text-[#7c7c7c]') + three('05-27', '2.62亿↓', '2.99万↑', 'text-[#ff9000]') + three('05-26', '2.82亿↑', '9000↓') + three('05-25', '2.70亿↓', '4.15万↑')) +
  sec4(kv('公司', '宋都基业投资股份有限公司') + kv('控股', '俞建午') + kv('主营', '房地产开发') + kv('地位', '杭州最早“老十八家”知名专...')) +
  sec(`<div class="h-[21px] flex gap-1.5 justify-end pr-1.5"><a href="#" class="text-[#4a90ff]">预测评级</a><a href="#">主题投资</a><a href="#">选股策略</a><span class="text-[#d8a040]">i</span></div>`) +
  sec(['年份 每股收益 年度PE text-[#7c7c7c]', '2022(预测) -- --', '2023(预测) -- --', '2024(预测) -- --'].map(r => { const [a, b, c, d] = r.split(' '); return `<div class="grid grid-cols-[72px_70px_1fr] h-[21px] ${d || ''}"><span>${a}</span><span class="text-right">${b}</span><span class="text-right">${c}</span></div>`; }).join('')) +
  sec(three('日期', '评级', '研究机构', 'text-[#7c7c7c]') + three('--', '--', '--').repeat(8));

$('ticker').innerHTML = '上证 3149.06 18.82 0.60% 3767亿|深证 11310.3 116.69 1.04% 4344亿|沪深 4029.02 27.72 0.69% 2111亿|创业 2350.38 27.90 1.20% 1291亿|科创 1001.54 7.84 0.79% 317.2亿'.split('|').map(r => {
  const [a, b, c, d, e] = r.split(' ');
  return `<div class="grid grid-cols-[28px_55px_42px_43px_52px] w-[220px]"><span>${a}</span><span class="text-[#ee0000]">${b}</span><span class="text-[#ee0000]">${c}</span><span class="text-[#ee0000]">${d}</span><span>${e}</span></div>`;
}).join('');
</script>
</body>
</html>
